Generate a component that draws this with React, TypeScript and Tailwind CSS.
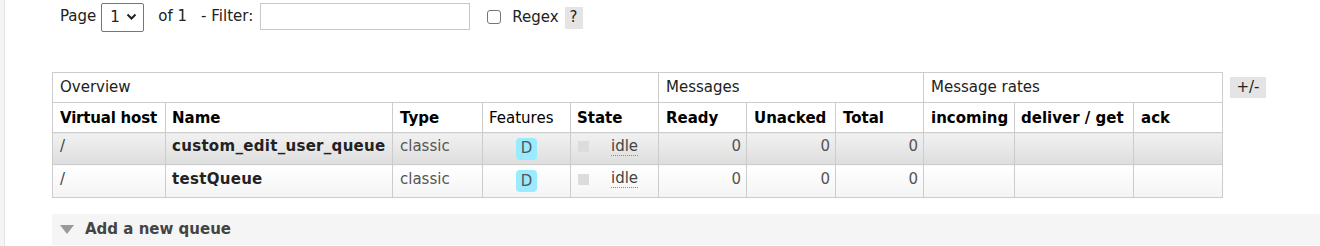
const font = { fontFamily: '"DejaVu Sans", Verdana, sans-serif' };

const cols = [113, 227, 90, 88, 88, 88, 89, 88, 91, 119, 89];

const queues = [
  { name: "custom_edit_user_queue", alt: true },
  { name: "testQueue", alt: false },
];

const Badge = () => (
  <span className="inline-flex items-center justify-center w-[21px] h-[22px] rounded-[4px] bg-[#99ebff] text-[#555]">
    D
  </span>
);

export default function App() {
  return (
    <div className="flex w-[1320px] h-[246px] bg-white text-[15px] text-[#444] overflow-hidden" style={font}>
      <div className="w-[5px] shrink-0 bg-[#f4f4f4] border-r border-[#e4e4e4]" />
      <div className="flex-1 pl-[47px]">
        {/* paging / filter */}
        <div className="flex items-center h-[33px] pl-[8px] text-[#222]">
          <span>Page</span>
          <div className="ml-[5px] flex items-center gap-[6px] w-[43px] h-[29px] mt-[1px] border border-[#767676] rounded-[2px] pl-[8px]">
            <span>1</span>
            <svg width="11" height="8" viewBox="0 0 11 8">
              <path d="M1.5 1.5 L5.5 5.5 L9.5 1.5" stroke="#222" strokeWidth="2" fill="none" />
            </svg>
          </div>
          <span className="ml-[14px]">of 1</span>
          <span className="ml-[14px]">- Filter:</span>
          <div className="ml-[7px] w-[210px] h-[27px] border border-[#c8c8c8] bg-white" />
          <div className="ml-[17px] w-[14px] h-[14px] border border-[#767676] rounded-[3px] bg-white" />
          <span className="ml-[11px] mt-[2px]">Regex</span>
          <span className="ml-[6px] mt-[2px] w-[18px] h-[22px] bg-[#e4e4e4] flex items-center justify-center">?</span>
        </div>

        {/* queues table */}
        <div className="flex items-start mt-[39px]">
          <table className="table-fixed border-collapse w-[1170px] whitespace-nowrap">
            <colgroup>
              {cols.map((w, i) => (
                <col key={i} style={{ width: w }} />
              ))}
            </colgroup>
            <thead>
              <tr className="h-[30px]">
                <th colSpan={5} className="border border-[#ccc] px-[7px] text-left font-normal text-[#222]">Overview</th>
                <th colSpan={3} className="border border-[#ccc] px-[7px] text-left font-normal text-[#222]">Messages</th>
                <th colSpan={3} className="border border-[#ccc] px-[7px] text-left font-normal text-[#222]">Message rates</th>
              </tr>
              <tr className="h-[30px] text-left text-black">
                <th className="border border-[#ccc] pl-[7px] pr-0 pt-[1px] font-bold tracking-[-0.2px]">Virtual host</th>
                <th className="border border-[#ccc] px-[6px] pt-[1px] font-bold">Name</th>
                <th className="border border-[#ccc] px-[7px] pt-[1px] font-bold">Type</th>
                <th className="border border-[#ccc] px-[6px] pt-[1px] font-normal">Features</th>
                <th className="border border-[#ccc] px-[6px] pt-[1px] font-bold">State</th>
                <th className="border border-[#ccc] px-[7px] pt-[1px] font-bold">Ready</th>
                <th className="border border-[#ccc] px-[7px] pt-[1px] font-bold">Unacked</th>
                <th className="border border-[#ccc] px-[7px] pt-[1px] font-bold">Total</th>
                <th className="border border-[#ccc] px-[7px] pt-[1px] font-bold">incoming</th>
                <th className="border border-[#ccc] px-[6px] pt-[1px] font-bold">deliver / get</th>
                <th className="border border-[#ccc] px-[7px] pt-[1px] font-bold">ack</th>
              </tr>
            </thead>
            <tbody>
              {queues.map((q) => {
                const bg = q.alt
                  ? "bg-[linear-gradient(#f1f1f1,#dedede)]"
                  : "bg-[linear-gradient(#ffffff,#f4f4f4)]";
                const td = `border border-[#ccc] ${bg}`;
                return (
                  <tr key={q.name} className={q.alt ? "h-[32px]" : "h-[33px]"}>
                    <td className={`${td} px-[7px] pb-[4px]`}>/</td>
                    <td className={`${td} px-[6px] pb-[4px] font-bold text-[#222] tracking-[0.3px]`}>{q.name}</td>
                    <td className={`${td} px-[7px] pb-[4px] text-[#555]`}>classic</td>
                    <td className={`${td} text-center`}><Badge /></td>
                    <td className={`${td} px-[7px] pb-[4px]`}>
                      <div className="flex items-center">
                        <span className="w-[11px] h-[11px] bg-[#dcdcdc]" />
                        <span className="ml-[22px] border-b border-dotted border-[#888] leading-[17px]">idle</span>
                      </div>
                    </td>
                    <td className={`${td} px-[5px] pb-[4px] text-right text-[#555]`}>0</td>
                    <td className={`${td} px-[5px] pb-[4px] text-right text-[#555]`}>0</td>
                    <td className={`${td} px-[5px] pb-[4px] text-right text-[#555]`}>0</td>
                    <td className={td} />
                    <td className={td} />
                    <td className={td} />
                  </tr>
                );
              })}
            </tbody>
          </table>
          <span className="ml-[7px] mt-[5px] w-[36px] h-[21px] bg-[#e4e4e4] flex items-center justify-center text-[#222]">+/-</span>
        </div>

        {/* add queue section */}
        <div className="mt-[16px] h-[31px] bg-[#f5f5f5] flex items-center pl-[8px]">
          <svg width="14" height="9" viewBox="0 0 14 9">
            <path d="M0 0 L14 0 L7 9 Z" fill="#9a9a9a" />
          </svg>
          <span className="ml-[11px] font-bold text-[#444]">Add a new queue</span>
        </div>
      </div>
    </div>
  );
}
